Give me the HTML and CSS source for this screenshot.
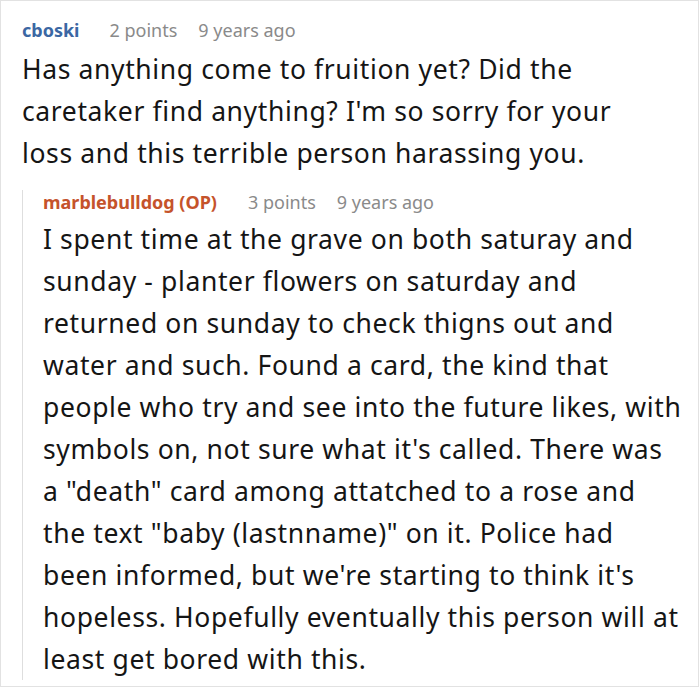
FILE: index.html
```html
<!DOCTYPE html>
<html lang="en">
<head>
<meta charset="utf-8">
<title>Comments</title>
<link rel="stylesheet" href="styles.css">
</head>
<body>
<div class="thread">
  <div class="comment">
    <div class="meta">
      <span class="author">cboski</span>
      <span class="info">2 points</span>
      <span class="info">9 years ago</span>
    </div>
    <p class="text top-text">Has anything come to fruition yet? Did the caretaker find anything? I'm so sorry for your loss and this terrible person harassing you.</p>
  </div>
  <div class="reply">
    <div class="meta reply-meta">
      <span class="author op">marblebulldog (OP)</span>
      <span class="info">3 points</span>
      <span class="info">9 years ago</span>
    </div>
    <p class="text reply-text">
      <span class="line">I spent time at the grave on both saturay and</span>
      <span class="line">sunday - planter flowers on saturday and</span>
      <span class="line">returned on sunday to check thigns out and</span>
      <span class="line">water and such. Found a card, the kind that</span>
      <span class="line">people who try and see into the future likes, with</span>
      <span class="line">symbols on, not sure what it's called. There was</span>
      <span class="line">a "death" card among attatched to a rose and</span>
      <span class="line">the text "baby (lastnname)" on it. Police had</span>
      <span class="line">been informed, but we're starting to think it's</span>
      <span class="line">hopeless. Hopefully eventually this person will at</span>
      <span class="line">least get bored with this.</span>
    </p>
  </div>
</div>
</body>
</html>
```

FILE: styles.css
```css
html, body {
  margin: 0;
  padding: 0;
  background: #ffffff;
}

.thread {
  box-sizing: border-box;
  width: 699px;
  height: 687px;
  border: 1px solid #e2e2e2;
  padding: 17px 10px 0 21px;
  font-family: "Noto Sans", "Open Sans", sans-serif;
  color: #151515;
  overflow: hidden;
}

.meta {
  display: flex;
  gap: 21px;
  font-size: 18px;
  line-height: 24px;
  height: 24px;
  white-space: nowrap;
}

.author {
  font-weight: 700;
  color: #3b67a3;
  margin-right: 9px;
}

.author.op {
  color: #c5532b;
  margin-right: 10px;
}

.info {
  color: #8a8a8a;
}

.text {
  margin: 0;
  font-size: 26.5px;
  letter-spacing: 0.62px;
  line-height: 42px;
}

.top-text {
  max-width: 625px;
  margin-top: 6px;
}

.reply {
  margin-top: 27px;
  border-left: 1px solid #dedede;
  padding-left: 20px;
}

.reply-meta {
  margin-top: -11px;
}

.reply-text {
  margin-top: 4px;
  margin-bottom: -10px;
}

.line {
  display: block;
  white-space: nowrap;
}
```
